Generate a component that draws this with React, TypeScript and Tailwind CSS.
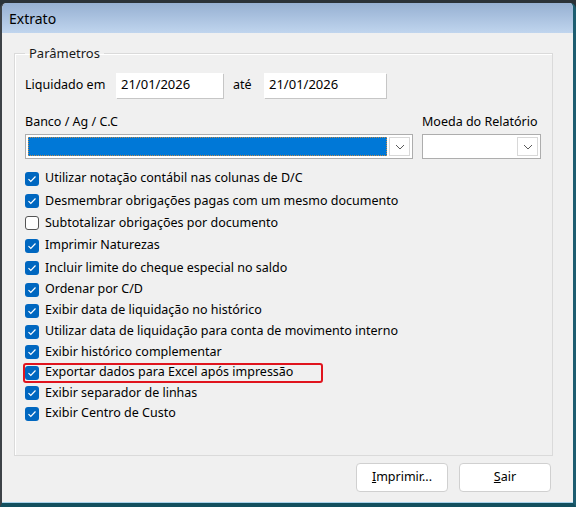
const opcoes = [
  { label: 'Utilizar notação contábil nas colunas de D/C', checked: true, h: 'h-[23px]' },
  { label: 'Desmembrar obrigações pagas com um mesmo documento', checked: true, h: 'h-[22px]' },
  { label: 'Subtotalizar obrigações por documento', checked: false, h: 'h-[22px]' },
  { label: 'Imprimir Naturezas', checked: true, h: 'h-[23px]' },
  { label: 'Incluir limite do cheque especial no saldo', checked: true, h: 'h-[22px]' },
  { label: 'Ordenar por C/D', checked: true, h: 'h-[21px]' },
  { label: 'Exibir data de liquidação no histórico', checked: true, h: 'h-[21px]' },
  { label: 'Utilizar data de liquidação para conta de movimento interno', checked: true, h: 'h-[21px]' },
  { label: 'Exibir histórico complementar', checked: true, h: 'h-[20px]' },
  { label: 'Exportar dados para Excel após impressão', checked: true, h: 'h-[21px]', destaque: true },
  { label: 'Exibir separador de linhas', checked: true, h: 'h-[20px]' },
  { label: 'Exibir Centro de Custo', checked: true, h: 'h-[21px]' },
];

function Chevron() {
  return (
    <svg width="10" height="6" viewBox="0 0 10 6" fill="none">
      <path d="M1 1l4 4 4-4" stroke="#5a5a5a" strokeWidth="1" />
    </svg>
  );
}

function Checkbox({ checked }: { checked: boolean }) {
  if (!checked) {
    return <div className="w-[14px] h-[14px] rounded-[3px] border border-[#555] bg-white shrink-0" />;
  }
  return (
    <div className="w-[14px] h-[14px] rounded-[3px] bg-[#0067c0] flex items-center justify-center shrink-0">
      <svg width="10" height="8" viewBox="0 0 10 8" fill="none">
        <path d="M1.5 4.2l2.3 2.3L8.5 1.5" stroke="white" strokeWidth="1.2" />
      </svg>
    </div>
  );
}

export default function App() {
  return (
    <div
      className="w-[576px] h-[507px] bg-[#2a3238] pt-[3px] overflow-hidden text-[12.5px] text-black"
      style={{ fontFamily: '"Noto Sans", "Open Sans", sans-serif' }}
    >
      <div className="h-[504px] flex flex-col bg-[#f0f0f0] border-l-[2px] border-l-[#3d4247] border-r-[3px] border-r-[#1d5d70] border-b-[4px] border-b-[#13505f] rounded-tl-[6px] rounded-tr-[6px] overflow-hidden">
        <div className="h-[30px] shrink-0 bg-gradient-to-b from-[#96b0d2] to-[#c0d5ee] flex items-center px-[7px] text-[14px]">
          Extrato
        </div>

        <div className="flex-1 flex flex-col px-[12px] border-b border-b-[#a8d3ec]">
          <fieldset className="relative mt-[14px] w-[539px] h-[409px] border border-[#dadada] shadow-[inset_1px_1px_0_#fff] px-[10px]">
            <legend className="ml-[0px] px-[4px] text-[13px] leading-none text-[#1a1a1a]">Parâmetros</legend>

            <div className="flex items-center mt-[12px] h-[26px]">
              <span className="w-[91px]">Liquidado em</span>
              <div className="w-[107px] h-[25px] bg-white shadow-[1px_1px_0_#c6c6c6] flex items-center px-[5px] text-[13px]">
                21/01/2026
              </div>
              <span className="ml-[10px] w-[31px]">até</span>
              <div className="w-[122px] h-[25px] bg-white shadow-[1px_1px_0_#c6c6c6] flex items-center px-[5px] text-[13px]">
                21/01/2026
              </div>
            </div>

            <div className="flex mt-[14px]">
              <div className="flex flex-col">
                <span className="h-[22px] flex items-end pb-[2px]">Banco / Ag / C.C</span>
                <div className="w-[388px] h-[25px] border border-[#adadad] bg-white flex items-center p-[2px]">
                  <div className="flex-1 h-full bg-[#0078d7] border border-dotted border-[#c08a4a]" />
                  <div className="w-[21px] h-[19px] ml-[2px] border border-[#d8d8d8] bg-white flex items-center justify-center">
                    <Chevron />
                  </div>
                </div>
              </div>
              <div className="flex flex-col ml-[9px]">
                <span className="h-[22px] flex items-end pb-[2px]">Moeda do Relatório</span>
                <div className="w-[119px] h-[25px] border border-[#adadad] bg-white flex items-center justify-end p-[2px]">
                  <div className="w-[21px] h-[19px] border border-[#d8d8d8] bg-white flex items-center justify-center">
                    <Chevron />
                  </div>
                </div>
              </div>
            </div>

            <div className="flex flex-col mt-[8px]">
              {opcoes.map((o) => (
                <div key={o.label} className={`${o.h} flex items-center`}>
                  <div
                    className={`flex items-center gap-[6px] h-[20px] pr-[6px] ${
                      o.destaque ? 'border-2 border-[#e0141e] rounded-[3px] -ml-[2px] pl-0 w-[300px]' : ''
                    }`}
                  >
                    <Checkbox checked={o.checked} />
                    <span className="whitespace-nowrap">{o.label}</span>
                  </div>
                </div>
              ))}
            </div>
          </fieldset>

          <div className="flex justify-end gap-[11px] mt-[7px] pr-[10px]">
            <button className="w-[92px] h-[29px] bg-white border border-[#d0d0d0] rounded-[4px] text-[12.5px]">
              <span className="underline">I</span>mprimir...
            </button>
            <button className="w-[92px] h-[29px] bg-white border border-[#d0d0d0] rounded-[4px] text-[12.5px]">
              <span className="underline">S</span>air
            </button>
          </div>
        </div>
      </div>
    </div>
  );
}
